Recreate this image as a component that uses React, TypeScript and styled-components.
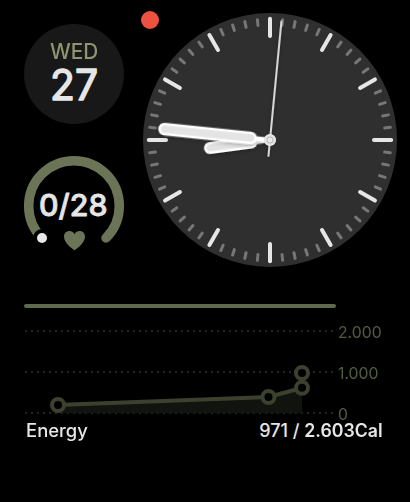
import React from "react";
import styled, { createGlobalStyle } from "styled-components";

const GlobalStyle = createGlobalStyle`
  * { box-sizing: border-box; }
  body { margin: 0; background: #000; }
`;

const Screen = styled.main`
  position: relative;
  width: 410px;
  height: 502px;
  overflow: hidden;
  background: #000;
  color: #e6e6e6;
  font-family: Inter, "Liberation Sans", sans-serif;
`;

const NotificationDot = styled.span`
  position: absolute;
  left: 141px;
  top: 11px;
  width: 18.4px;
  height: 18.4px;
  border-radius: 50%;
  background: #ed5140;
`;

const UpperFace = styled.section`
  display: flex;
  justify-content: space-between;
  height: 304px;
  padding: 13px 13px 0 24px;
`;

const Complications = styled.div`
  display: flex;
  flex-direction: column;
  gap: 32px;
  width: 100px;
  padding-top: 11px;
`;

const DateDisc = styled.div`
  display: flex;
  flex-direction: column;
  align-items: center;
  width: 100px;
  height: 100px;
  padding-top: 16px;
  border-radius: 50%;
  background: #181818;
`;

const Label = styled.span<{
  $size: number;
  $line: number;
  $weight?: number;
  $stretch?: number;
  $color?: string;
  $origin?: string;
}>`
  display: block;
  white-space: nowrap;
  font-size: ${(p) => p.$size}px;
  line-height: ${(p) => p.$line}px;
  font-weight: ${(p) => p.$weight ?? 400};
  color: ${(p) => p.$color ?? "#e6e6e6"};
  transform: scaleX(${(p) => p.$stretch ?? 1});
  transform-origin: ${(p) => p.$origin ?? "center"};
`;

const Gauge = styled.div`
  display: grid;
  width: 100px;
  height: 100px;
  place-items: center;
  > * { grid-area: 1 / 1; }
`;

const Drawing = styled.svg`
  display: block;
  flex: none;
  overflow: visible;
`;

/* Numerals whose outline is softened into rounded stroke ends. */
const RoundedNumerals = styled.text<{ $size: number; $weight: number; $stroke: number }>`
  font-size: ${(p) => p.$size}px;
  font-weight: ${(p) => p.$weight};
  fill: #e6e6e6;
  stroke: #e6e6e6;
  stroke-width: ${(p) => p.$stroke}px;
  stroke-linejoin: round;
`;

const Energy = styled.section`
  padding: 0 24px;
`;

const ProgressBar = styled.div`
  width: 312px;
  height: 4px;
  border-radius: 2px;
  background: #5f694c;
`;

const ChartRow = styled.div`
  display: flex;
  height: 110px;
`;

const Axis = styled.div`
  display: flex;
  flex-direction: column;
  gap: 25px;
  padding: 16px 0 0 2px;
`;

const Footer = styled.footer`
  display: flex;
  justify-content: space-between;
  padding: 2px 3px 0 2px;
`;

const Amount = styled.div`
  display: flex;
  gap: 4px;
`;

const ticks = Array.from({ length: 60 }, (_, i) => i);

function Clock() {
  return (
    <Drawing width="254" height="254" viewBox="-127 -127 254 254">
      <defs>
        <filter id="handShadow" filterUnits="userSpaceOnUse" x="-127" y="-127" width="254" height="254">
          <feDropShadow dx="0" dy="1" stdDeviation="2" floodOpacity="0.35" />
        </filter>
      </defs>
      <circle r="127" fill="#2f2f2f" />
      {ticks.map((i) => {
        const major = i % 5 === 0;
        return (
          <line
            key={i}
            y1={major ? -121.2 : -121}
            y2={major ? -104 : -115.2}
            stroke={major ? "#e6e6e6" : "#777"}
            strokeWidth={major ? 4 : 3}
            strokeLinecap="round"
            transform={`rotate(${i * 6})`}
          />
        );
      })}
      <g transform="rotate(-7.6)" filter="url(#handShadow)" strokeLinecap="round">
        <path d="M0 0H-18" stroke="#fff" strokeWidth="4.5" />
        <path d="M-19 0H-60.5" stroke="#fff" strokeWidth="12" />
        <path d="M-19 0H-60.5" stroke="#e2e2e2" strokeWidth="7" />
      </g>
      <g transform="rotate(5.9)" filter="url(#handShadow)" strokeLinecap="round">
        <path d="M0 0H-18" stroke="#fff" strokeWidth="4.5" />
        <path d="M-19.5 0H-106" stroke="#fff" strokeWidth="12.5" />
        <path d="M-19.5 0H-106" stroke="#e4e4e4" strokeWidth="7.4" />
      </g>
      <circle r="6" fill="#e8e8e8" />
      <path
        d="M0 16V-119"
        stroke="#e8e8e8"
        strokeWidth="1.8"
        strokeLinecap="round"
        transform="rotate(5.5)"
        filter="url(#handShadow)"
      />
      <circle r="5.8" fill="#e4e4e4" />
      <circle r="3.1" fill="#e8e8e8" stroke="#b5b5b5" strokeWidth="1" />
    </Drawing>
  );
}

function ActivityGauge() {
  return (
    <Gauge>
      <Drawing width="100" height="100" viewBox="-50 -50 100 100">
        <path
          d="M-32 32A45.3 45.3 0 1 1 32 32"
          fill="none"
          stroke="#6b7456"
          strokeWidth="9.5"
          strokeLinecap="round"
        />
        <circle cx="-32" cy="32" r="9" fill="#000" />
        <circle cx="-32" cy="32" r="5" fill="#e8e8e8" />
        <path
          d="M.5 44.3C-2 42.5-10 37-10 30.7C-10 27.3-7.7 25-4.7 25C-2.5 25-.5 26.2.5 28.2C1.5 26.2 3.5 25 5.8 25C8.8 25 11 27.3 11 30.7C11 37 3 42.5.5 44.3Z"
          fill="#6b7456"
        />
        <RoundedNumerals
          $size={30.5}
          $weight={500}
          $stroke={0.8}
          x="-35"
          y="10"
          textLength="68.5"
          lengthAdjust="spacingAndGlyphs"
        >
          0/28
        </RoundedNumerals>
      </Drawing>
    </Gauge>
  );
}

const points = [[34, 93], [244.5, 85], [278, 75.8], [278, 61]];

function EnergyChart() {
  return (
    <Drawing width="312" height="110" viewBox="0 -4 312 110">
      {[19, 60, 101].map((y) => (
        <path key={y} d={`M1 ${y}H311`} stroke="#242424" strokeWidth="2" strokeDasharray="2 4" />
      ))}
      <path d="M34 93L244.5 85L278 76V101H34Z" fill="#11130f" />
      <path d="M40 92.7L238.5 85.3M250 83.5L272.3 77.5" stroke="#3c412f" strokeWidth="4" />
      {points.map(([x, y]) => (
        <circle key={y} cx={x} cy={y} r="6" fill="#000" stroke="#3c412f" strokeWidth="4" />
      ))}
    </Drawing>
  );
}

export default function App() {
  return (
    <Screen>
      <GlobalStyle />
      <UpperFace>
        <Complications>
          <DateDisc>
            <Label $size={21.6} $line={23} $weight={500} $color="#8d9670" $stretch={0.96}>WED</Label>
            <Drawing width="100" height="44" viewBox="0 0 100 44">
              <RoundedNumerals
                $size={42}
                $weight={400}
                $stroke={1.4}
                x="26"
                y="37"
                textLength="48"
                lengthAdjust="spacingAndGlyphs"
              >
                27
              </RoundedNumerals>
            </Drawing>
          </DateDisc>
          <ActivityGauge />
        </Complications>
        <Clock />
      </UpperFace>
      <Energy>
        <ProgressBar />
        <ChartRow>
          <EnergyChart />
          <Axis>
            {["2.000", "1.000", "0"].map((value) => (
              <Label key={value} $size={16.5} $line={16} $color="#535b41" $stretch={0.955} $origin="left">{value}</Label>
            ))}
          </Axis>
        </ChartRow>
        <Footer>
          <Label $size={18} $line={22} $weight={500} $stretch={1.025} $origin="left">Energy</Label>
          <Amount>
            <Label $size={18} $line={22} $weight={500} $origin="right">971 /</Label>
            <Label $size={18} $line={22} $weight={600} $stretch={0.985} $origin="right">2.603Cal</Label>
          </Amount>
        </Footer>
      </Energy>
      <NotificationDot />
    </Screen>
  );
}
